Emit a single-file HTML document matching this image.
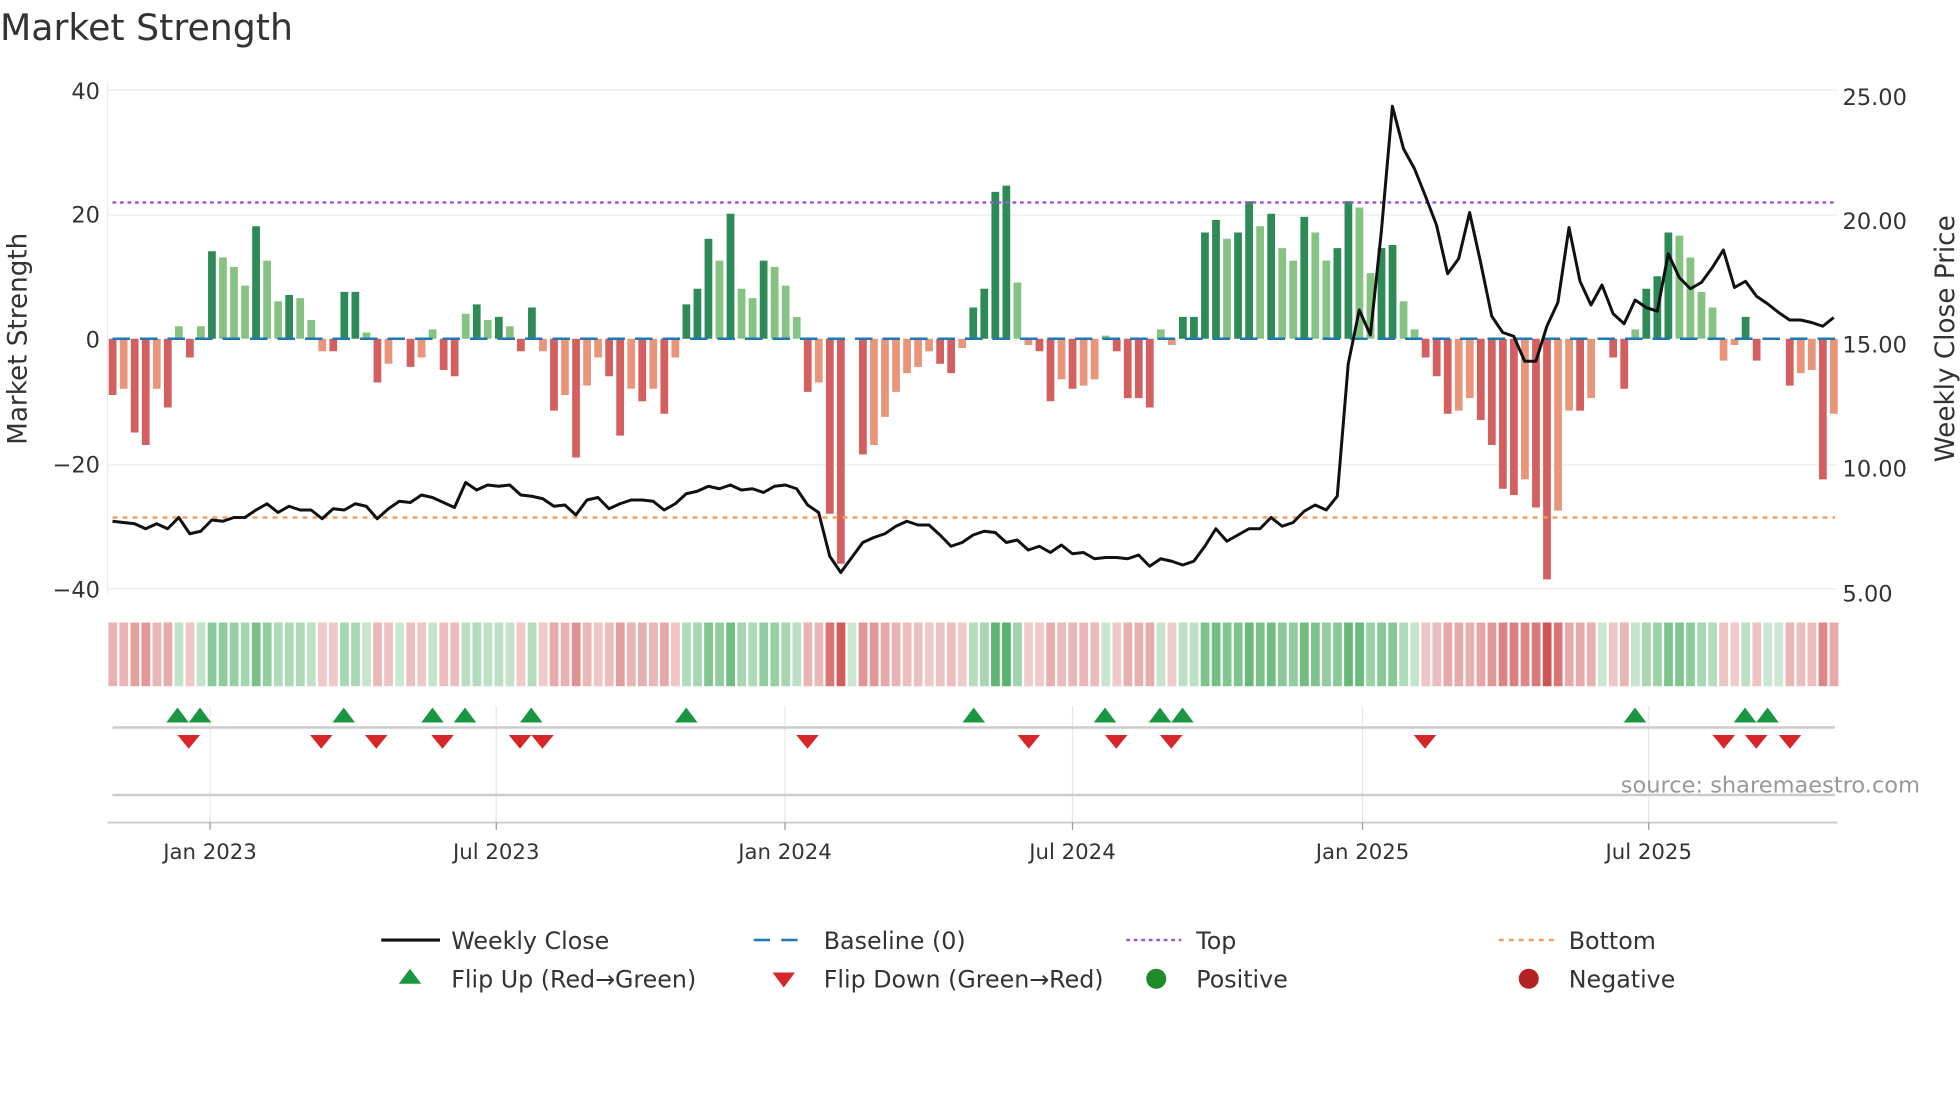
<!DOCTYPE html>
<html><head><meta charset="utf-8"><style>
html,body{margin:0;padding:0;background:#fff;}
svg{display:block;font-family:"DejaVu Sans","Liberation Sans",sans-serif;}
</style></head><body>
<svg id="s" width="1960" height="1102" viewBox="0 0 1568 881.6" preserveAspectRatio="none" xmlns="http://www.w3.org/2000/svg">
<rect width="1568" height="882" fill="#fff"/>
<text x="0" y="32" font-size="29" fill="#333">Market Strength</text>
<g stroke="#ececec" stroke-width="1">
<line x1="86" y1="72" x2="1470" y2="72"/><line x1="86" y1="172" x2="1470" y2="172"/>
<line x1="86" y1="372" x2="1470" y2="372"/><line x1="86" y1="471" x2="1470" y2="471"/>
<line x1="86" y1="66" x2="86" y2="476"/>
</g>
<g font-size="18" fill="#333" text-anchor="end">
<text x="80" y="79">40</text><text x="80" y="178">20</text><text x="80" y="278">0</text><text x="80" y="378">−20</text><text x="80" y="478">−40</text>
</g>
<g font-size="18" fill="#333">
<text x="1474" y="84">25.00</text><text x="1474" y="183">20.00</text><text x="1474" y="282">15.00</text><text x="1474" y="381">10.00</text><text x="1474" y="481">5.00</text>
</g>
<text transform="translate(21,271) rotate(-90)" font-size="21" fill="#333" text-anchor="middle">Market Strength</text>
<text transform="translate(1563,271) rotate(-90)" font-size="21" fill="#333" text-anchor="middle">Weekly Close Price</text>
<g id="bars"></g>
<line x1="90" y1="271" x2="1468" y2="271" stroke="#1f77b4" stroke-width="2" stroke-dasharray="14,8"/>
<line x1="90" y1="162" x2="1468" y2="162" stroke="#9b59d6" stroke-width="2" stroke-dasharray="3,3"/>
<line x1="90" y1="414" x2="1468" y2="414" stroke="#f0a060" stroke-width="2" stroke-dasharray="4,4"/>
<polyline id="price" fill="none" stroke="#111" stroke-width="2.4" stroke-linejoin="round"/>
<g id="heat"></g>
<g stroke="#e6e6e6" stroke-width="1">
<line x1="168" y1="565" x2="168" y2="658"/><line x1="397" y1="565" x2="397" y2="658"/><line x1="628" y1="565" x2="628" y2="658"/><line x1="858" y1="565" x2="858" y2="658"/><line x1="1090" y1="565" x2="1090" y2="658"/><line x1="1319" y1="565" x2="1319" y2="658"/>
</g>
<line x1="90" y1="582" x2="1468" y2="582" stroke="#ccc" stroke-width="2"/>
<line x1="90" y1="636" x2="1468" y2="636" stroke="#ccc" stroke-width="2"/>
<line x1="86" y1="658" x2="1470" y2="658" stroke="#ccc" stroke-width="1.5"/>
<g id="flips"></g>
<text x="1536" y="634" font-size="18" fill="#999" text-anchor="end">source: sharemaestro.com</text>
<g stroke="#999" stroke-width="1"><line x1="168" y1="658" x2="168" y2="664"/><line x1="397" y1="658" x2="397" y2="664"/><line x1="628" y1="658" x2="628" y2="664"/><line x1="858" y1="658" x2="858" y2="664"/><line x1="1090" y1="658" x2="1090" y2="664"/><line x1="1319" y1="658" x2="1319" y2="664"/></g>
<g font-size="17" fill="#333" text-anchor="middle">
<text x="168" y="687">Jan 2023</text><text x="397" y="687">Jul 2023</text><text x="628" y="687">Jan 2024</text><text x="858" y="687">Jul 2024</text><text x="1090" y="687">Jan 2025</text><text x="1319" y="687">Jul 2025</text>
</g>
<g font-size="19" fill="#333">
<line x1="305" y1="752" x2="352" y2="752" stroke="#111" stroke-width="2.5"/><text x="361" y="759">Weekly Close</text>
<line x1="603" y1="752" x2="647" y2="752" stroke="#1f77b4" stroke-width="2" stroke-dasharray="13,9"/><text x="659" y="759">Baseline (0)</text>
<line x1="901" y1="752" x2="945" y2="752" stroke="#9b59d6" stroke-width="2" stroke-dasharray="3,3"/><text x="957" y="759">Top</text>
<line x1="1199" y1="752" x2="1243" y2="752" stroke="#f0a060" stroke-width="2" stroke-dasharray="4,4"/><text x="1255" y="759">Bottom</text>
<polygon points="328,775 319,787 337,787" fill="#1a9641"/><text x="361" y="790">Flip Up (Red→Green)</text>
<polygon points="627,790 618,778 636,778" fill="#d7262a"/><text x="659" y="790">Flip Down (Green→Red)</text>
<circle cx="925" cy="783" r="8" fill="#1f8a2a"/><text x="957" y="790">Positive</text>
<circle cx="1223" cy="783" r="8" fill="#b22222"/><text x="1255" y="790">Negative</text>
</g>
</svg>
<script>
var v=[-9,-8,-15,-17,-8,-11,2,-3,2,14,13,11.5,8.5,18,12.5,6,7,6.5,3,-2,-2,7.5,7.5,1,-7,-4,0,-4.5,-3,1.5,-5,-6,4,5.5,3,3.5,2,-2,5,-2,-11.5,-9,-19,-7.5,-3,-6,-15.5,-8,-10,-8,-12,-3,5.5,8,16,12.5,20,8,6.5,12.5,11.5,8.5,3.5,-8.5,-7,-28,-36,0,-18.5,-17,-12.5,-8.5,-5.5,-4.5,-2,-4,-5.5,-1.5,5,8,23.5,24.5,9,-1,-2,-10,-6.5,-8,-7.5,-6.5,0.5,-2,-9.5,-9.5,-11,1.5,-1,3.5,3.5,17,19,16,17,22,18,20,14.5,12.5,19.5,17,12.5,14.5,22,21,10.5,14.5,15,6,1.5,-3,-6,-12,-11.5,-9.5,-13,-17,-24,-25,-22.5,-27,-38.5,-27.5,-11.5,-11.5,-9.5,0,-3,-8,1.5,8,10,17,16.5,13,7.5,5,-3.5,-1,3.5,-3.5,0,0,-7.5,-5.5,-5,-22.5,-12];
var p=[417,418,419,423,419,423,414,427,425,416,417,414,414,408,403,410,405,408,408,415,407,408,403,405,415,407,401,402,396,398,402,406,386,392,388,389,388,396,397,399,405,404,412,400,398,407,403,400,400,401,408,403,395,393,389,391,388,392,391,394,389,388,391,404,410,445,458,446,434,430,427,421,417,420,420,428,437,434,428,425,426,434,432,440,437,442,436,443,442,447,446,446,447,444,453,447,449,452,449,437,423,433,428,423,423,414,421,418,409,404,408,397,291,248,268,185,85,119,135,157,180,219,207,170,210,253,266,269,289,289,261,242,182,225,244,228,251,259,240,246,249,203,222,231,226,214,200,230,225,237,243,250,256,256,258,261,254];
var NS="http://www.w3.org/2000/svg";
function el(t,a,par){var e=document.createElementNS(NS,t);for(var k in a)e.setAttribute(k,a[k]);document.getElementById(par).appendChild(e);return e;}
var n=v.length,dx=(1467-90)/(n-1);
function mix(c,t){var r=Math.round(255+(c[0]-255)*t),g=Math.round(255+(c[1]-255)*t),b=Math.round(255+(c[2]-255)*t);return"rgb("+r+","+g+","+b+")";}
for(var i=0;i<n;i++){var x=90+i*dx,a=v[i],pr=i>0?Math.abs(v[i-1]):0,dark=Math.abs(a)>=pr;
 var col=a>=0?(dark?"#2e8b57":"#86c282"):(dark?"#d35f5f":"#e8957a");
 var h=Math.abs(a)*5;if(h>0.3)el("rect",{x:x-3,y:a>=0?271-h:271,width:6.2,height:h,fill:col},"bars");
 var t=a>=0?0.25+0.55*Math.min(a/25,1):0.25+0.65*Math.min(-a/40,1);
 el("rect",{x:x-3.3,y:498,width:7,height:51,fill:a>=0?mix([46,160,70],t):mix([200,60,60],t)},"heat");}
var pts=[],m=p.length,dp=(1467-90)/(m-1);for(var j=0;j<m;j++)pts.push((90+j*dp).toFixed(1)+","+p[j]);
document.getElementById("price").setAttribute("points",pts.join(" "));
[142,160,275,346,372,425,549,779,884,928,946,1308,1396,1414].forEach(function(x){el("polygon",{points:x+",566 "+(x-9)+",578 "+(x+9)+",578",fill:"#1a9641"},"flips");});
[151,257,301,354,416,434,646,823,893,937,1140,1379,1405,1432].forEach(function(x){el("polygon",{points:x+",599 "+(x-9)+",588 "+(x+9)+",588",fill:"#d7262a"},"flips");});
</script>
</body></html>
